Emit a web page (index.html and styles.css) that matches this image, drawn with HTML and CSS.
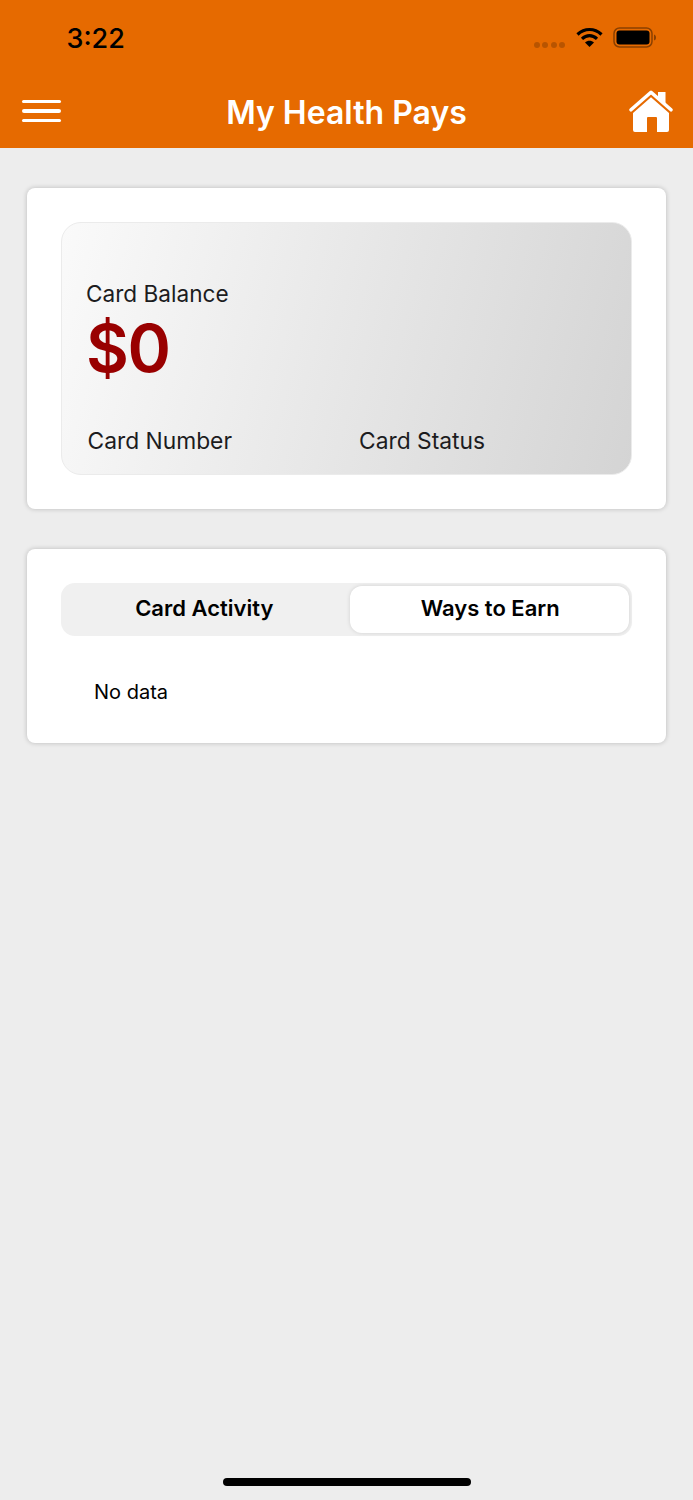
FILE: index.html
```html
<!DOCTYPE html>
<html lang="en">
<head>
<meta charset="utf-8">
<title>My Health Pays</title>
<link rel="stylesheet" href="styles.css">
</head>
<body>
<div class="screen">
  <header class="header">
    <div class="status">
      <span class="time">3:22</span>
      <div class="status-icons">
        <div class="signal"><i></i><i></i><i></i><i></i></div>
        <svg class="wifi" width="27" height="21" viewBox="0 0 27 21"><path d="M1.500 7.500C8.500 .8 18.500 .8 25.500 7.500" fill="none" stroke="#000" stroke-width="3.200"/><path d="M6 11.800C10.500 7.600 16.500 7.600 21 11.800" fill="none" stroke="#000" stroke-width="3.200"/><path d="M9 15.500C11.500 13.200 15.500 13.200 18 15.500L13.500 20Z" fill="#000"/></svg>
        <svg class="battery" width="44" height="22" viewBox="0 0 44 22"><rect x="1" y="1" width="38" height="19" rx="5.500" fill="none" stroke="#000" stroke-opacity=".4" stroke-width="1.500"/><rect x="3.500" y="3.500" width="33" height="14" rx="3" fill="#000"/><path d="M41 7.500c1.500.5 2 1.500 2 3s-.5 2.500-2 3z" fill="#000" fill-opacity=".4"/></svg>
      </div>
    </div>
    <div class="nav">
      <div class="menu"><i></i><i></i><i></i></div>
      <h1 class="title">My Health Pays</h1>
      <svg class="home" width="44" height="42" viewBox="0 0 44 42"><path d="M29 2h7.500v13L29 9z" fill="#fff"/><path d="M2 19.800 22 2.200 42 19.800" fill="none" stroke="#fff" stroke-width="3.500" stroke-linecap="round" stroke-linejoin="round"/><path d="M4 23 22 7.200 40 23V40a2 2 0 0 1-2 2H28V28a1 1 0 0 0-1-1H19a1 1 0 0 0-1 1V42H6a2 2 0 0 1-2-2z" fill="#fff"/></svg>
    </div>
  </header>
  <main class="content">
    <section class="card">
      <div class="balance">
        <div class="balance-label">Card Balance</div>
        <div class="amount">$0</div>
        <div class="meta">
          <span class="meta-number">Card Number</span>
          <span>Card Status</span>
        </div>
      </div>
    </section>
    <section class="card card-activity">
      <div class="tabs">
        <div class="tab tab-plain">Card Activity</div>
        <div class="tab tab-active">Ways to Earn</div>
      </div>
      <p class="empty">No data</p>
    </section>
  </main>
  <div class="home-indicator"></div>
</div>
</body>
</html>
```
FILE: styles.css
```css
* { box-sizing: border-box; }
html, body { margin: 0; padding: 0; }
body { font-family: Inter, "Liberation Sans", sans-serif; background: #ededed; }
.screen { width: 693px; height: 1500px; display: flex; flex-direction: column; overflow: hidden; background: #ededed; }
.header { height: 148px; background: #e66a00; flex: none; }
.status { height: 74px; display: flex; justify-content: space-between; padding: 23px 36px 0 66.500px; }
.time { font-size: 27px; line-height: 32px; font-weight: 500; color: #000; }
.status-icons { display: flex; align-items: flex-start; margin-top: -1px; }
.signal { display: flex; gap: 2.500px; margin: 20px 11px 0 0; }
.signal i { width: 6px; height: 6px; border-radius: 50%; background: #000; opacity: .2; }
.wifi { margin: 5px 10px 0 0; }
.battery { margin-top: 5px; }
.nav { height: 74px; display: flex; align-items: center; justify-content: space-between; padding: 0 20px 0 22px; position: relative; }
.menu { width: 39px; display: flex; flex-direction: column; gap: 6.200px; }
.menu i { height: 3.300px; border-radius: 2px; background: #fff; }
.title { position: absolute; left: 0; right: 0; top: 19px; margin: 0; text-align: center; font-size: 32px; line-height: 40px; font-weight: 600; color: #fff; }
.content { padding: 40px 27px 0; display: flex; flex-direction: column; gap: 40px; }
.card { background: #fff; border-radius: 8px; padding: 34px; box-shadow: 0 0 5px rgba(0,0,0,.22); }
.balance { height: 253px; border-radius: 20px; border: 1px solid #ebebeb; background: linear-gradient(105deg, #fafafa, #d4d4d4); padding: 57px 0 0 24px; color: #1c1c1e; }
.balance-label { font-size: 22.600px; line-height: 28px; }
.amount { font-size: 66px; line-height: 76px; font-weight: 600; letter-spacing: -1.500px; color: #990000; margin-top: 2px; }
.meta { display: flex; font-size: 22.800px; line-height: 28px; margin-top: 41px; margin-left: 1.500px; }
.meta-number { width: 271.500px; }
.card-activity { height: 194px; }
.tabs { height: 53px; display: grid; grid-template-columns: 1fr 1fr; background: #f0f0f0; border-radius: 14px; padding: 3px; }
.tab { display: flex; align-items: center; justify-content: center; font-size: 22px; line-height: 24px; font-weight: 600; color: #000; border-radius: 12px; padding-bottom: 4px; }
.tab-plain { padding-right: 2px; }
.tab-active { background: #fff; box-shadow: 0 0 4px rgba(0,0,0,.13); margin-left: 3px; padding-left: 2px; }
.empty { margin: 43px 0 0 33px; font-size: 20px; line-height: 26px; color: #000; }
.home-indicator { position: absolute; left: 223px; top: 1478px; width: 248px; height: 8px; border-radius: 4px; background: #000; }
```
